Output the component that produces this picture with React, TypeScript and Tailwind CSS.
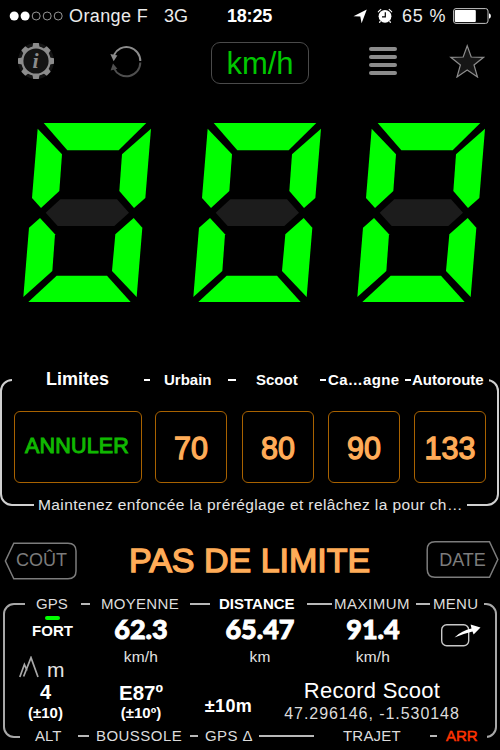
import React from "react";

// Outlines of the six lit segments of a zero
const SEGMENTS = [
  "101,39 409,39 326,121 172,121",
  "83,56 156,133 148,243 93,294 66,264",
  "423,56 406,264 372,294 328,243 336,133",
  "90,324 135,373 127,483 40,561 57,353",
  "371,324 397,353 380,561 306,483 316,373",
  "140,497 291,497 362,576 55,576",
];

const PRESETS = [
  { value: "70", style: "ml-[13px]" },
  { value: "80", style: "ml-[15px]" },
  { value: "90", style: "ml-[14px]" },
  { value: "133", style: "ml-[14px]" },
];

function Digit({ className }: { className: string }) {
  return (
    <svg viewBox="36 36 390 546" className={`h-[182px] w-[130px] shrink-0 ${className}`}>
      {SEGMENTS.map((points) => (
        <polygon key={points} points={points} fill="#00ff00" />
      ))}
      {/* Middle bar is switched off */}
      <polygon points="107,308 151,268 321,268 357,308 313,348 143,348" fill="#1c1c1c" />
    </svg>
  );
}

function Dash({ className }: { className: string }) {
  return <span className={`h-[1.5px] shrink-0 ${className}`} />;
}

function StatusBar() {
  return (
    <div className="flex h-8 items-center text-[18px] leading-8">
      <svg viewBox="0 0 56 10" className="ml-[9px] h-[10px] w-[56px] shrink-0">
        <circle cx="5.2" cy="5" r="4.5" fill="#fff" />
        <circle cx="16.1" cy="5" r="4.5" fill="#fff" />
        <circle cx="27.2" cy="5" r="4" fill="none" stroke="#bbb" strokeWidth="0.8" />
        <circle cx="38.2" cy="5" r="4" fill="none" stroke="#bbb" strokeWidth="0.8" />
        <circle cx="49.2" cy="5" r="4" fill="none" stroke="#bbb" strokeWidth="0.8" />
      </svg>
      <span className="ml-[4px] w-[95px] tracking-[0.4px] text-[#ececec]">Orange F</span>
      <span className="w-[63px] text-[#ececec]">3G</span>
      <span className="w-[126px] font-bold tracking-[-0.2px]">18:25</span>
      <svg viewBox="0 0 14 15" className="h-[15px] w-[14px] shrink-0">
        <path d="M13.8 0.5 L8.6 14.3 L7.3 7.5 L0.5 7.2 Z" fill="#fff" />
      </svg>
      <svg viewBox="0 0 16 16" className="ml-[10px] h-4 w-4 shrink-0">
        <circle cx="8" cy="8.3" r="6.4" fill="#fff" />
        <path d="M1 4.2 A10 10 0 0 1 4.2 1.2 M11.8 1.2 A10 10 0 0 1 15 4.2" fill="none" stroke="#fff" strokeWidth="1.1" />
        <path d="M3.4 13 L2.4 14.8 M12.6 13 L13.6 14.8" stroke="#fff" strokeWidth="1.3" />
        <path d="M8.3 4.2 V8.8 H5" fill="none" stroke="#000" strokeWidth="1.2" />
      </svg>
      <span className="ml-[9px] w-[51px] tracking-[0.8px] text-[#ececec]">65 %</span>
      <svg viewBox="0 0 39 16" className="h-4 w-[39px] shrink-0">
        <rect x="0.6" y="0.6" width="34.4" height="14.8" rx="2.4" fill="none" stroke="#c4c4c4" strokeWidth="1" />
        <rect x="1.8" y="1.9" width="21" height="12.2" rx="1" fill="#fff" />
        <path d="M36 5.2 A3 3 0 0 1 36 10.8 Z" fill="#fff" />
      </svg>
    </div>
  );
}

function Toolbar() {
  return (
    <div className="flex h-[62px] items-center">
      <svg viewBox="0 0 38 38" className="mb-1 ml-[17px] h-[38px] w-[38px] shrink-0">
        <circle cx="19" cy="19" r="18" fill="#141414" />
        <g fill="#8c8c8c">
          {[0, 45, 90, 135, 180, 225, 270, 315].map((angle) => (
            <path key={angle} d="M15.4 5.5 L16.2 1 H21.8 L22.6 5.5 Z" transform={`rotate(${angle} 19 19)`} />
          ))}
        </g>
        <circle cx="19" cy="19" r="13.7" fill="#141414" stroke="#8c8c8c" strokeWidth="2.2" />
        <text x="18.6" y="26" textAnchor="middle" fill="#8c8c8c" fontFamily="Liberation Serif, serif" fontStyle="italic" fontWeight="bold" fontSize="22">
          i
        </text>
      </svg>
      <svg viewBox="0 0 34 36" className="mb-1 ml-[54px] h-9 w-[34px] shrink-0" fill="none" strokeWidth="2">
        <path d="M31.3 18 A13.8 13.8 0 0 0 5 12" stroke="#8c8c8c" />
        <path d="M1.4 11 L8.4 12.4 L4.6 18.2 Z" fill="#8c8c8c" />
        <path d="M31.3 19.6 A13.8 13.8 0 0 1 5 25.4" stroke="#4f4f4f" />
        <path d="M4 20.4 L8.4 25.8 L1.6 27.4 Z" fill="#4f4f4f" />
      </svg>
      <button className="ml-[68px] h-[42px] w-[98px] shrink-0 rounded-[9px] border border-[#4a4a4a] text-[31px] leading-none text-[#00c800]">
        km/h
      </button>
      <div className="mb-1 ml-[60px] flex w-[28px] flex-col gap-[4px]">
        <span className="h-[4px] rounded-full bg-[#8c8c8c]" />
        <span className="h-[4px] rounded-full bg-[#8c8c8c]" />
        <span className="h-[4px] rounded-full bg-[#8c8c8c]" />
        <span className="h-[4px] rounded-full bg-[#8c8c8c]" />
      </div>
      <svg viewBox="0 0 36 34" className="mb-1 ml-[52px] h-[34px] w-9 shrink-0">
        <path
          d="M18.2 1.8 L22.2 13 L34.6 13.3 L25 21 L28.5 33 L18.2 26 L8 33 L11.4 21 L1.8 13.3 L14.2 13 Z"
          fill="#161616"
          stroke="#8c8c8c"
          strokeWidth="1.2"
        />
      </svg>
    </div>
  );
}

function LimitsPanel() {
  return (
    <section className="mt-[75px] mr-px h-[127px] rounded-[12px] border-2 border-[#d0d0d0]">
      <header className="-mt-[11px] ml-[10px] flex h-5 w-[477px] items-center bg-black text-[15px] leading-5 font-bold whitespace-nowrap">
        <span className="ml-[34px] w-[98px] pb-[2px] text-[18px]">Limites</span>
        <Dash className="w-[6px] bg-white" />
        <span className="ml-[14px] w-[64px]">Urbain</span>
        <Dash className="w-[8px] bg-white" />
        <span className="ml-[20px] w-[64px]">Scoot</span>
        <Dash className="w-[6px] bg-white" />
        <span className="ml-[2px] w-[77px] tracking-[0.3px]">Ca…agne</span>
        <Dash className="w-[6px] bg-white" />
        <span className="ml-[1px]">Autoroute</span>
      </header>
      <div className="mt-[21px] flex">
        <button className="ml-3 h-[72px] w-[128px] rounded-[6px] border border-[#a86200] pr-[2px] text-[21.5px] leading-none tracking-[0.2px] text-[#10b800] [-webkit-text-stroke:1px]">
          ANNULER
        </button>
        {PRESETS.map((preset) => (
          <button
            key={preset.value}
            className={`h-[72px] w-[72px] rounded-[6px] border border-[#a86200] pt-[3px] text-[30.5px] leading-none text-[#ffac58] [-webkit-text-stroke:1.3px] ${preset.style}`}
          >
            {preset.value}
          </button>
        ))}
      </div>
      <p className="mt-3 ml-[32px] h-5 w-[433px] bg-black pl-[4px] text-[15.5px] leading-5 tracking-[0.4px] whitespace-nowrap text-[#e4e4e4]">
        Maintenez enfoncée la préréglage et relâchez la pour ch…
      </p>
    </section>
  );
}

function LimitRow() {
  return (
    <div className="mt-[35px] flex h-[39px] items-center">
      <button className="relative ml-[4px] h-[39px] w-[74px] shrink-0 pr-[1px] pl-[2px] text-[18px] text-[#7c7c7c]">
        <svg viewBox="0 0 74 39" className="absolute inset-0 h-full w-full" fill="none">
          <path d="M9.8 2.2 H64 Q72 2.2 72 10 V30 Q72 37.8 64 37.8 H9.8 L1.4 20 Z" stroke="#7c7c7c" strokeWidth="1.5" />
        </svg>
        COÛT
      </button>
      <h1 className="ml-[51px] w-[297px] pb-[2px] text-[34px] leading-none whitespace-nowrap text-[#ffac58] [-webkit-text-stroke:1.4px]">
        PAS DE LIMITE
      </h1>
      <button className="relative h-[39px] w-[74px] shrink-0 pr-[1px] pb-[1px] text-[18px] text-[#7c7c7c]">
        <svg viewBox="0 0 74 39" className="absolute inset-0 h-full w-full" fill="none">
          <path d="M63.5 0.8 H9 Q1.2 0.8 1.2 8.8 V28 Q1.2 36.2 9 36.2 H63.5 L71.8 18.5 Z" stroke="#7c7c7c" strokeWidth="1.5" />
        </svg>
        DATE
      </button>
    </div>
  );
}

function Average({ value, unit, className }: { value: string; unit: string; className: string }) {
  return (
    <div className={`flex flex-col items-center ${className}`}>
      <span className="mt-[3px] h-6 font-[Lato] text-[27px] leading-6 font-black [-webkit-text-stroke:0.9px]">{value}</span>
      <span className="mt-[6px] h-5 text-[15.5px] leading-5 tracking-[0.2px] text-[#e4e4e4]">{unit}</span>
    </div>
  );
}

function StatsPanel() {
  return (
    <section className="mt-[23px] mr-[3px] ml-[3px] h-[135px] rounded-[11px] border-2 border-[#a8a8a8] text-[15px]">
      <header className="-mt-[11px] ml-[20px] flex h-5 w-[459px] items-center bg-black leading-5 whitespace-nowrap text-[#dcdcdc]">
        <span className="ml-[11px] w-[45px]">GPS</span>
        <Dash className="w-[9px] bg-[#b8b8b8]" />
        <span className="ml-[11px] w-[89px] tracking-[0.3px]">MOYENNE</span>
        <Dash className="w-[20px] bg-[#b8b8b8]" />
        <span className="ml-[9px] w-[88px] font-bold text-white">DISTANCE</span>
        <Dash className="w-[25px] bg-[#b8b8b8]" />
        <span className="ml-[2px] w-[82px] tracking-[0.5px]">MAXIMUM</span>
        <Dash className="w-[14px] bg-[#b8b8b8]" />
        <span className="ml-[3px] tracking-[0.3px]">MENU</span>
      </header>

      <div className="flex h-[112px]">
        <div className="flex w-[81px] flex-col items-center font-bold">
          <span className="mt-[2px] mr-[-14px] h-[4px] w-[15px] rounded-full bg-[#00ff00]" />
          <span className="mt-[1px] mr-[-14px] h-5 w-[95px] text-center leading-5">FORT</span>
          <div className="mt-[14px] flex h-[23px] w-full items-end pl-[14px] font-normal">
            <svg viewBox="0 0 20 22" className="h-[22px] w-5" fill="none" stroke="#a8a8a8" strokeWidth="1.7">
              <path d="M0.8 21 L5.4 8.5 L8 14.5 M4.6 20.5 L12 1.6 L19 21" />
            </svg>
            <span className="ml-[8px] text-[21px] leading-[17px] text-[#e4e4e4]">m</span>
          </div>
          <span className="mt-[2px] h-6 text-[20px] leading-6">4</span>
          <span className="-mt-[1px] h-5 leading-5">(±10)</span>
        </div>

        <div className="flex flex-1 flex-col">
          <div className="flex h-[65px]">
            <Average value="62.3" unit="km/h" className="w-[110px]" />
            <Average value="65.47" unit="km" className="w-[128px]" />
            <Average value="91.4" unit="km/h" className="w-[98px]" />
            <svg viewBox="0 0 42 26" className="mt-[8px] ml-[18px] h-[26px] w-[42px] shrink-0">
              <rect x="1.7" y="2.7" width="27" height="21" rx="5" fill="none" stroke="#c8c8c8" strokeWidth="1.4" />
              <path d="M14.5 15.4 Q22 8.6 31.5 6.6 L30.6 2.6 L40.5 5.4 L33.6 12.6 L32.5 9.6 Q23 12 14.5 15.4 Z" fill="#fff" />
            </svg>
          </div>
          <div className="flex h-[47px] whitespace-nowrap">
            <div className="flex w-[110px] flex-col items-center font-bold">
              <span className="mt-[2px] h-6 text-[20.5px] leading-6">E87º</span>
              <span className="-mt-[2px] h-5 leading-5">(±10º)</span>
            </div>
            <div className="w-[65px] pt-[17px] text-center text-[18px] leading-5 font-bold tracking-[0.4px]">±10m</div>
            <div className="flex w-[222px] flex-col items-center">
              <span className="h-6 text-[22px] leading-6 tracking-[0.25px]">Record Scoot</span>
              <span className="mt-[1px] h-5 text-[16px] leading-5 tracking-[0.95px] text-[#dcdcdc]">47.296146, -1.530148</span>
            </div>
          </div>
        </div>
      </div>

      <footer className="ml-[15px] flex h-5 w-[467px] items-center bg-black leading-5 whitespace-nowrap text-[#dcdcdc]">
        <span className="ml-[15px] w-[43px]">ALT</span>
        <Dash className="w-[11px] bg-[#b8b8b8]" />
        <span className="ml-[7px] w-[94px] tracking-[0.45px]">BOUSSOLE</span>
        <Dash className="w-[8px] bg-[#b8b8b8]" />
        <span className="ml-[7px] w-[54px] tracking-[0.4px]">GPS Δ</span>
        <Dash className="w-[55px] bg-[#b8b8b8]" />
        <span className="ml-[29px] w-[87px] tracking-[0.2px]">TRAJET</span>
        <Dash className="w-[7px] bg-[#b8b8b8]" />
        <span className="ml-[9px] text-[#ff3300] [-webkit-text-stroke:0.5px]">ARR</span>
      </footer>
    </section>
  );
}

export default function App() {
  return (
    <div className="h-[750px] w-[500px] overflow-hidden bg-black font-['Liberation_Sans',Arial,sans-serif] text-white">
      <StatusBar />
      <Toolbar />
      <div className="flex pt-[28px]">
        <Digit className="ml-[22px]" />
        <Digit className="ml-[40px]" />
        <Digit className="ml-[34px]" />
      </div>
      <LimitsPanel />
      <LimitRow />
      <StatsPanel />
    </div>
  );
}
